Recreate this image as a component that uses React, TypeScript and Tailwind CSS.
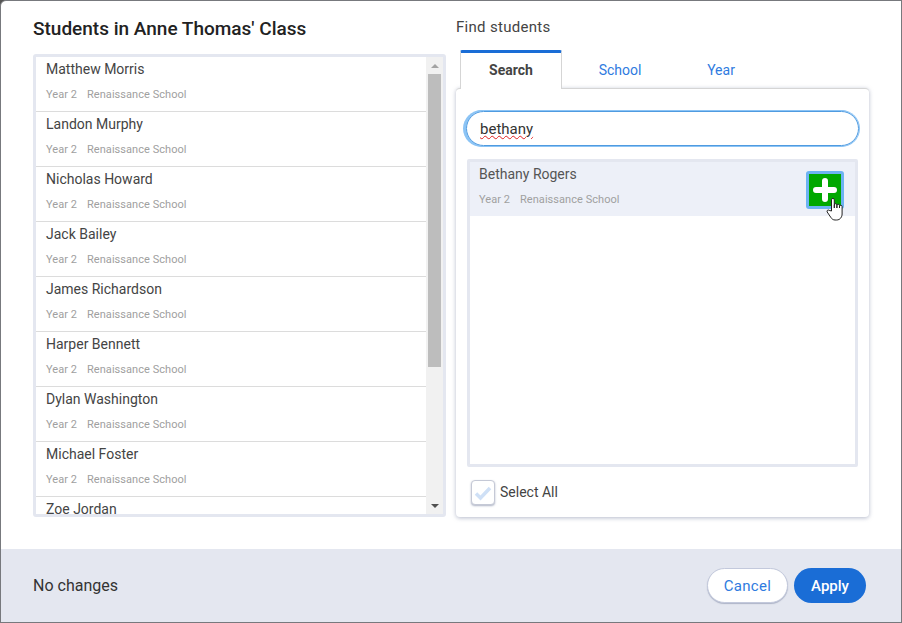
import React from 'react';

const students = [
  'Matthew Morris',
  'Landon Murphy',
  'Nicholas Howard',
  'Jack Bailey',
  'James Richardson',
  'Harper Bennett',
  'Dylan Washington',
  'Michael Foster',
  'Zoe Jordan',
];

const Meta: React.FC = () => (
  <div className="flex gap-[10px] text-[11px] leading-[14px] tracking-[0.05px] text-[#a0a0a0]">
    <span>Year 2</span>
    <span>Renaissance School</span>
  </div>
);

const StudentRow: React.FC<{ name: string }> = ({ name }) => (
  <div className="h-[55px] shrink-0 border-b border-[#dcdcdc] pl-[10px] pt-[2px]">
    <div className="text-[14px] leading-[20px] text-[#444]">{name}</div>
    <div className="mt-[9px]">
      <Meta />
    </div>
  </div>
);

const App: React.FC = () => {
  return (
    <div className="h-[623px] w-[902px] overflow-hidden bg-[#555]">
      <div className="flex h-full flex-col overflow-hidden rounded-tl-[6px] border border-[#77797d] bg-white font-['Roboto',sans-serif]">
        <div className="flex h-[548px] shrink-0 pl-[32px]">
          <div className="w-[413px] shrink-0">
            <h2 className="mt-[15px] text-[19px] leading-[26px] font-medium text-[#222]">
              Students in Anne Thomas' Class
            </h2>
            <div className="mt-[12px] flex h-[463px] rounded-[3px] border-[3px] border-[#e4e7f0]">
              <div className="flex min-w-0 flex-1 flex-col overflow-hidden">
                {students.map((name) => (
                  <StudentRow key={name} name={name} />
                ))}
              </div>
              <div className="flex w-[17px] shrink-0 flex-col bg-[#f1f1f1]">
                <div className="flex h-[17px] items-center justify-center">
                  <div className="h-0 w-0 border-x-[4px] border-b-[4px] border-x-transparent border-b-[#a3a3a3]" />
                </div>
                <div className="mx-[2px] h-[293px] bg-[#bdbdbd]" />
                <div className="flex-1" />
                <div className="flex h-[17px] items-center justify-center">
                  <div className="h-0 w-0 border-x-[4px] border-t-[4px] border-x-transparent border-t-[#505050]" />
                </div>
              </div>
            </div>
          </div>

          <div className="ml-[10px] w-[413px] shrink-0">
            <div className="mt-[15px] h-[22px] text-[15px] leading-[22px] tracking-[0.3px] text-[#444]">Find students</div>
            <div className="mt-[12px] flex h-[38px] pl-[4px]">
              <div className="relative z-10 flex h-[39px] w-[102px] items-center justify-center rounded-t-[2px] border-x border-t-[3px] border-x-[#d5d5d5] border-t-[#1a6dd6] bg-white pb-[2px] text-[14px] font-bold text-[#444]">
                Search
              </div>
              <div className="ml-[8px] flex w-[100px] items-center justify-center pt-[2px] text-[14px] text-[#2f7be0]">School</div>
              <div className="ml-px flex w-[100px] items-center justify-center pt-[2px] text-[14px] text-[#2f7be0]">Year</div>
            </div>
            <div className="flex h-[429px] flex-col rounded-[4px] border-t border-[#d5d5d5] bg-white pt-[22px] pr-[10px] pl-[10px] shadow-[0_1px_4px_rgba(120,130,160,0.55)]">
              <div className="flex h-[35px] items-center rounded-full border border-[#4f9be0] pt-[1px] pl-[13px] text-[15px] text-[#333] shadow-[0_0_0_1px_#8cc4f5,-2px_0_0_1px_#8cc4f5]">
                <span className="underline decoration-[#e02020] decoration-wavy decoration-1 underline-offset-1">bethany</span>
              </div>
              <div className="mx-px mt-[13px] h-[308px] rounded-[2px] border-[3px] border-[#e4e7f0]">
                <div className="relative flex h-[54px] bg-[#edf0f8] pt-[2px] pl-[9px]">
                  <div>
                    <div className="text-[14px] leading-[20px] text-[#555]">Bethany Rogers</div>
                    <div className="mt-[9px]">
                      <Meta />
                    </div>
                  </div>
                  <div className="absolute top-[9px] right-[11px] flex h-[38px] w-[38px] items-center justify-center rounded-[3px] border-[3px] border-[#6db3f2] bg-[#00a800]">
                    <svg width="24" height="24" viewBox="0 0 24 24">
                      <path d="M12 3v18M3 12h18" stroke="white" strokeWidth="6" strokeLinecap="round" />
                    </svg>
                  </div>
                  {/* hand cursor */}
                  <svg
                    width="20"
                    height="25"
                    viewBox="0 0 20 25"
                    className="absolute top-[35px] right-[9px]"
                  >
                    <path
                      d="M5.5 14V2.8a1.4 1.4 0 0 1 2.8 0V11V8a1.3 1.3 0 0 1 2.6 0V11V8.6a1.3 1.3 0 0 1 2.6 0V11V9.6a1.3 1.3 0 0 1 2.6 0V17c0 3-2 6-5.5 6h-1.5c-2 0-3.2-1-4.2-2.5L1.2 15c-.8-1.4.9-2.6 2-1.6Z"
                      fill="white"
                      stroke="#222"
                      strokeWidth="1"
                      strokeLinejoin="round"
                    />
                  </svg>
                </div>
              </div>
              <div className="mt-[13px] flex items-center pl-[5px]">
                <div className="flex h-[25px] w-[24px] items-center justify-center rounded-[4px] border border-[#c5c9d6] bg-white shadow-[0_1px_2px_rgba(120,130,160,0.6)]">
                  <svg width="18" height="18" viewBox="0 0 18 18">
                    <path d="M2 9.5 6.5 14 16 4" fill="none" stroke="#cfe0f6" strokeWidth="3.5" />
                  </svg>
                </div>
                <span className="ml-[5px] text-[14px] text-[#444]">Select All</span>
              </div>
            </div>
          </div>
        </div>

        <div className="flex flex-1 items-center justify-between bg-[#e4e7f0] pr-[35px] pl-[32px]">
          <span className="pt-[1px] text-[16px] text-[#333]">No changes</span>
          <div className="flex items-center gap-[6px]">
            <button className="h-[35px] w-[81px] rounded-full border border-[#c3c9dc] bg-white pt-[1px] text-[15px] tracking-[0.3px] text-[#2f7be0] shadow-[0_1px_1px_rgba(120,130,160,0.5)]">
              Cancel
            </button>
            <button className="h-[35px] w-[72px] rounded-full bg-[#1a6dd6] pt-[1px] text-[15px] font-medium text-white">
              Apply
            </button>
          </div>
        </div>
      </div>
    </div>
  );
};

export default App;
